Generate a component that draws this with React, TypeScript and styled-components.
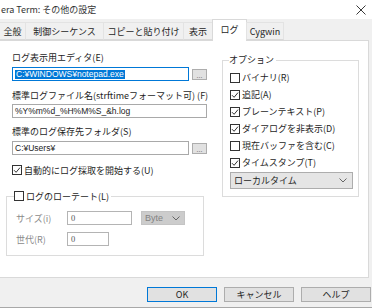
import { FC } from "react";
import styled, { createGlobalStyle } from "styled-components";

const GlobalStyle = createGlobalStyle`
  html, body {
    margin: 0;
    padding: 0;
    background: #ffffff;
  }

  body {
    font-family: "Noto Sans CJK JP", "Noto Sans", sans-serif;
    font-size: 9px;
    color: #1e1e1e;
  }
`;

const Tick: FC<{ checked: boolean }> = ({ checked }) => (
  <CheckBox>
    {checked && (
      <svg width="8" height="8" viewBox="0 0 8 8">
        <path d="M1 4.2 L3.1 6.3 L7 1.6" fill="none" stroke="#333" strokeWidth="1" />
      </svg>
    )}
  </CheckBox>
);

const Check: FC<{ label: string; checked?: boolean }> = ({ label, checked = false }) => (
  <CheckRow>
    <Tick checked={checked} />
    <span>{label}</span>
  </CheckRow>
);

const Chevron: FC = () => (
  <svg width="8" height="5" viewBox="0 0 8 5">
    <path d="M0.5 0.5 L4 4 L7.5 0.5" fill="none" stroke="#666" strokeWidth="1" />
  </svg>
);

const tabs = [
  { label: "全般", width: 27 },
  { label: "制御シーケンス", width: 79 },
  { label: "コピーと貼り付け", width: 81 },
  { label: "表示", width: 30 },
  { label: "ログ", width: 35, active: true },
  { label: "Cygwin", width: 38 },
];

const options = [
  { label: "バイナリ(R)", checked: false },
  { label: "追記(A)", checked: true },
  { label: "プレーンテキスト(P)", checked: true },
  { label: "ダイアログを非表示(D)", checked: true },
  { label: "現在バッファを含む(C)", checked: false },
  { label: "タイムスタンプ(T)", checked: true },
];

const App: FC = () => {
  return (
    <>
      <GlobalStyle />
      <Window>
        <TitleBar>
          <span>era Term: その他の設定</span>
          <svg width="10" height="10" viewBox="0 0 10 10">
            <path d="M0.5 0.5 L9.5 9.5 M9.5 0.5 L0.5 9.5" stroke="#222" strokeWidth="0.9" />
          </svg>
        </TitleBar>

        <Body>
          <TabStrip>
            {tabs.map((t) => (
              <Tab key={t.label} $width={t.width} $active={!!t.active}>
                {t.label}
              </Tab>
            ))}
          </TabStrip>

          <Panel>
            <LeftColumn>
              <FieldLabel>ログ表示用エディタ(E)</FieldLabel>
              <FieldRow>
                <TextBox $focused>
                  <Selected>C:¥WINDOWS¥notepad.exe</Selected>
                </TextBox>
                <BrowseButton>...</BrowseButton>
              </FieldRow>

              <FieldLabel $gap={9}>標準ログファイル名(strftimeフォーマット可) (F)</FieldLabel>
              <FieldRow $gap={2}>
                <TextBox>%Y%m%d_%H%M%S_&amp;h.log</TextBox>
              </FieldRow>

              <FieldLabel $gap={8}>標準のログ保存先フォルダ(S)</FieldLabel>
              <FieldRow>
                <TextBox>C:¥Users¥</TextBox>
                <BrowseButton>...</BrowseButton>
              </FieldRow>

              <AutoStart>
                <Check label="自動的にログ採取を開始する(U)" checked />
              </AutoStart>

              <RotateGroup>
                <RotateLegend>
                  <Check label="ログのローテート(L)" />
                </RotateLegend>
                <RotateRow>
                  <DimLabel>サイズ(i)</DimLabel>
                  <SmallBox $width={65}>0</SmallBox>
                  <DisabledSelect>
                    <span>Byte</span>
                    <Chevron />
                  </DisabledSelect>
                </RotateRow>
                <RotateRow $gap={7}>
                  <DimLabel>世代(R)</DimLabel>
                  <SmallBox $width={42}>0</SmallBox>
                </RotateRow>
              </RotateGroup>
            </LeftColumn>

            <OptionsGroup>
              <OptionsLegend>オプション</OptionsLegend>
              <OptionList>
                {options.map((o) => (
                  <OptionItem key={o.label}>
                    <Check label={o.label} checked={o.checked} />
                  </OptionItem>
                ))}
              </OptionList>
              <TimeSelect>
                <span>ローカルタイム</span>
                <Chevron />
              </TimeSelect>
            </OptionsGroup>
          </Panel>

          <Footer>
            <DialogButton $primary>OK</DialogButton>
            <DialogButton>キャンセル</DialogButton>
            <DialogButton>ヘルプ</DialogButton>
          </Footer>
        </Body>
      </Window>
    </>
  );
};

const Window = styled.div`
  width: 372px;
  height: 308px;
  display: flex;
  flex-direction: column;
  overflow: hidden;
  background: #ffffff;
`;

const TitleBar = styled.div`
  height: 19px;
  flex: none;
  display: flex;
  align-items: center;
  justify-content: space-between;
  padding: 0 6px 0 1px;
  color: #333;

  svg {
    margin-top: 1px;
  }
`;

const Body = styled.div`
  flex: 1;
  display: flex;
  flex-direction: column;
  background: #f0f0f0;
  border-bottom: 1px solid #a8a8a8;
`;

const TabStrip = styled.div`
  height: 21px;
  display: flex;
  align-items: flex-end;
  position: relative;
  z-index: 1;
`;

const Tab = styled.div<{ $width: number; $active: boolean }>`
  width: ${(p) => p.$width}px;
  height: ${(p) => (p.$active ? 22 : 18)}px;
  margin-bottom: ${(p) => (p.$active ? -1 : 0)}px;
  display: flex;
  align-items: center;
  justify-content: center;
  box-sizing: border-box;
  padding-bottom: ${(p) => (p.$active ? 3 : 0)}px;
  background: ${(p) => (p.$active ? "#ffffff" : "#f0f0f0")};
  border: 1px solid ${(p) => (p.$active ? "#d9d9d9" : "#e3e3e3")};
  border-bottom: ${(p) => (p.$active ? "none" : "1px solid #d9d9d9")};
  margin-left: -1px;
  white-space: nowrap;
`;

const Panel = styled.div`
  width: 369px;
  height: 238px;
  box-sizing: border-box;
  display: flex;
  align-items: flex-start;
  padding: 11px 0 0 6px;
  background: #ffffff;
  border: 1px solid #d9d9d9;
  border-left: none;
`;

const LeftColumn = styled.div`
  width: 201px;
  display: flex;
  flex-direction: column;
`;

const FieldLabel = styled.div<{ $gap?: number }>`
  height: 12px;
  line-height: 12px;
  margin: ${(p) => p.$gap ?? 0}px 0 0 6px;
  white-space: nowrap;
`;

const FieldRow = styled.div<{ $gap?: number }>`
  display: flex;
  align-items: center;
  gap: 3px;
  height: 14px;
  margin: ${(p) => p.$gap ?? 3}px 0 0 6px;
`;

const TextBox = styled.div<{ $focused?: boolean }>`
  flex: 1;
  height: 14px;
  box-sizing: border-box;
  display: flex;
  align-items: center;
  padding: 0 2px;
  border: 1px solid ${(p) => (p.$focused ? "#0078d7" : "#a9a9a9")};
  background: #ffffff;
  font-family: "Liberation Sans", "Noto Sans CJK JP", sans-serif;
  font-size: 8.5px;
  color: #222;
  white-space: nowrap;
  overflow: hidden;
`;

const Selected = styled.span`
  background: #0078d7;
  color: #ffffff;
  line-height: 9px;
  padding: 0 1px;
`;

const BrowseButton = styled.div`
  width: 15px;
  height: 11px;
  box-sizing: border-box;
  border: 1px solid #adadad;
  background: #e1e1e1;
  display: flex;
  align-items: flex-end;
  justify-content: center;
  font-family: "Liberation Sans", sans-serif;
  font-size: 7px;
  line-height: 7px;
  color: #555;
`;

const CheckRow = styled.div`
  display: flex;
  align-items: center;
  gap: 2px;
  height: 12px;
  white-space: nowrap;
`;

const CheckBox = styled.div`
  width: 10px;
  height: 10px;
  box-sizing: border-box;
  border: 1px solid #333333;
  background: #ffffff;
  display: flex;
  align-items: center;
  justify-content: center;
  flex: none;
`;

const AutoStart = styled.div`
  margin: 9px 0 0 6px;
`;

const RotateGroup = styled.fieldset`
  margin: 14px 0 0 0;
  width: 198px;
  box-sizing: border-box;
  padding: 0 0 9px 9px;
  border: 1px solid #dcdcdc;
  min-width: 0;
`;

const RotateLegend = styled.legend`
  padding: 0 2px 0 0;
  margin-left: -2px;
`;

const RotateRow = styled.div<{ $gap?: number }>`
  display: flex;
  align-items: center;
  height: 14px;
  margin-top: ${(p) => p.$gap ?? 9}px;
`;

const DimLabel = styled.div`
  width: 51px;
  color: #8a8a8a;
  white-space: nowrap;
`;

const SmallBox = styled.div<{ $width: number }>`
  width: ${(p) => p.$width}px;
  height: 14px;
  box-sizing: border-box;
  border: 1px solid #b4b4b4;
  padding: 0 3px;
  display: flex;
  align-items: center;
  font-family: "Liberation Serif", serif;
  font-size: 8.5px;
  color: #555;
`;

const DisabledSelect = styled.div`
  width: 44px;
  height: 14px;
  margin-left: 9px;
  box-sizing: border-box;
  border: 1px solid #c4c4c4;
  background: #cccccc;
  color: #838383;
  display: flex;
  align-items: center;
  justify-content: space-between;
  padding: 0 4px 0 3px;
  font-family: "Liberation Sans", sans-serif;
  font-size: 9px;
`;

const OptionsGroup = styled.fieldset`
  margin: 2px 0 0 15px;
  width: 137px;
  box-sizing: border-box;
  padding: 0 5px 7px 7px;
  border: 1px solid #dcdcdc;
  min-width: 0;
`;

const OptionsLegend = styled.legend`
  padding: 0 2px 0 0;
  margin-left: -1px;
  line-height: 12px;
`;

const OptionList = styled.div`
  display: flex;
  flex-direction: column;
  margin-top: 3px;
`;

const OptionItem = styled.div`
  height: 17px;
  display: flex;
  align-items: center;
`;

const TimeSelect = styled.div`
  margin-top: 1px;
  height: 17px;
  box-sizing: border-box;
  border: 1px solid #adadad;
  background: #e5e5e5;
  display: flex;
  align-items: center;
  justify-content: space-between;
  padding: 0 5px 0 3px;
`;

const Footer = styled.div`
  flex: 1;
  display: flex;
  justify-content: flex-end;
  align-items: flex-start;
  gap: 7px;
  padding: 9px 1px 0 0;
`;

const DialogButton = styled.div<{ $primary?: boolean }>`
  width: 70px;
  height: 15px;
  box-sizing: border-box;
  display: flex;
  align-items: center;
  justify-content: center;
  background: #e1e1e1;
  border: 1px solid ${(p) => (p.$primary ? "#0078d7" : "#adadad")};
`;

export default App;
